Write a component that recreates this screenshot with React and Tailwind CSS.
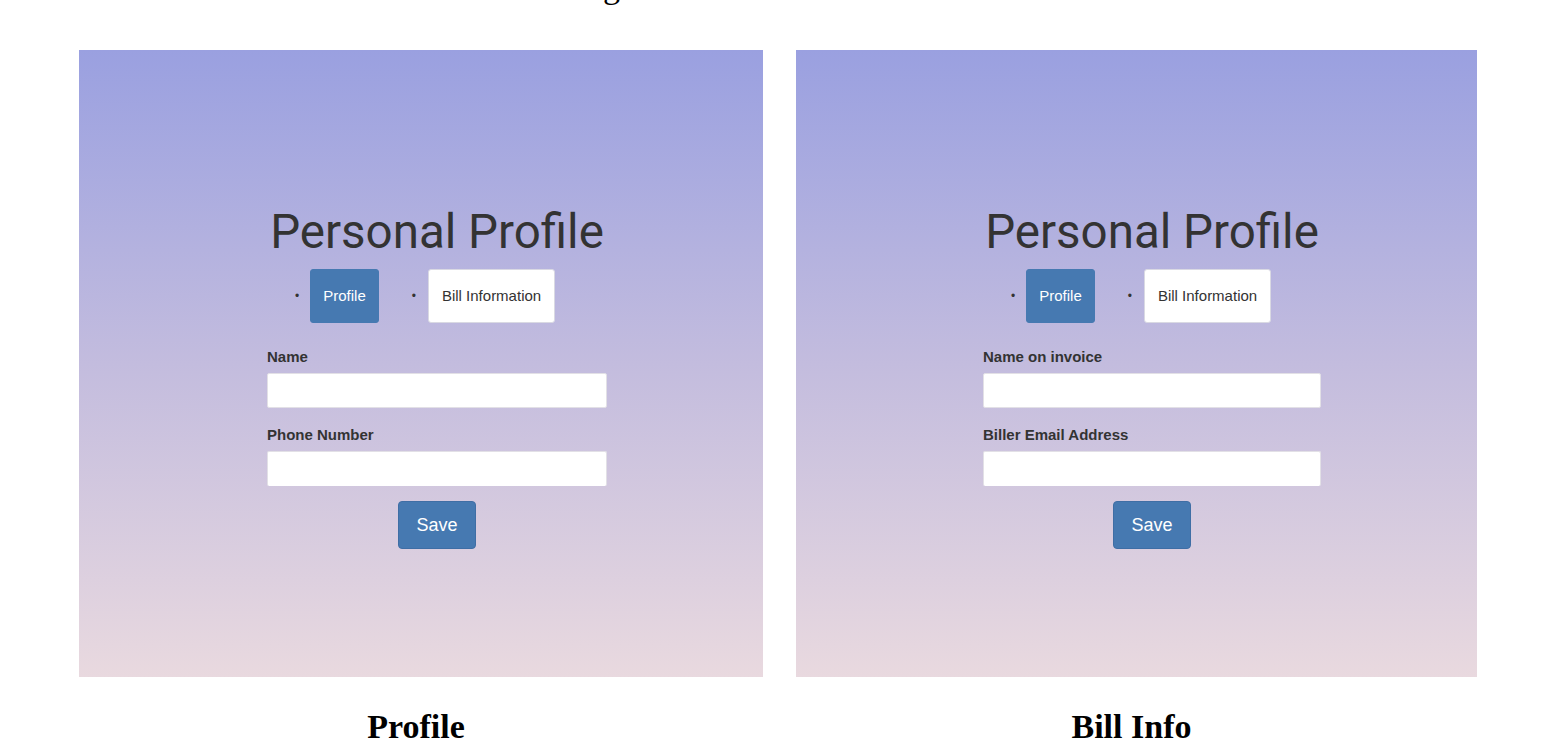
import React from 'react';

const panels = [
  {
    key: 'profile',
    width: 'w-[684px]',
    inset: 'pl-[188px]',
    column: 'w-[340px]',
    tabs: 'pl-[28px]',
    fields: ['Name', 'Phone Number'],
    caption: 'Profile',
  },
  {
    key: 'bill',
    width: 'w-[681px]',
    inset: 'pl-[187px]',
    column: 'w-[338px]',
    tabs: 'pl-[28px]',
    fields: ['Name on invoice', 'Biller Email Address'],
    caption: 'Bill Info',
  },
];

function ProfileCard({ panel }) {
  return (
    <div className={`h-[627px] pt-[155px] ${panel.inset} bg-gradient-to-b from-[#9aa0e0] via-[#c3bcde] to-[#e9d9df]`}>
      <div className={panel.column}>
        {/* Title */}
        <h1 className="text-center text-[47.5px] leading-[54px] text-[#333] font-['Roboto',sans-serif] whitespace-nowrap">
          Personal Profile
        </h1>

        {/* Tabs */}
        <ul className={`mt-[10px] ${panel.tabs} flex items-center h-[54px] font-['Liberation_Sans',Arial,sans-serif] text-[15px]`}>
          <li className="flex items-center">
            <span className="text-[#333] text-[12px] mr-[11px]">•</span>
            <button className="h-[54px] px-[12px] rounded-[3px] bg-[#4679b1] border border-[#4679b1] text-white">
              Profile
            </button>
          </li>
          <li className="flex items-center ml-[33px]">
            <span className="text-[#333] text-[12px] mr-[12px]">•</span>
            <button className="h-[54px] px-[13px] rounded-[3px] bg-white border border-[#d9d9e3] text-[#333]">
              Bill Information
            </button>
          </li>
        </ul>

        {/* Form */}
        <form className="font-['Liberation_Sans',Arial,sans-serif]">
          <label className="block mt-[25px] text-[15px] leading-[18px] font-bold text-[#333]">
            {panel.fields[0]}
          </label>
          <input
            type="text"
            className="block mt-[7px] w-full h-[35px] bg-white border border-[#e2e0e6] rounded-[2px]"
          />
          <label className="block mt-[18px] text-[15px] leading-[18px] font-bold text-[#333]">
            {panel.fields[1]}
          </label>
          <input
            type="text"
            className="block mt-[7px] w-full h-[35px] bg-white border border-[#e2e0e6] border-b-0 rounded-[2px]"
          />
          <div className="flex justify-center mt-[15px]">
            <button
              type="button"
              className="w-[78px] h-[48px] rounded-[4px] bg-[#4679b1] border border-[#3f6ea5] text-white text-[18px]"
            >
              Save
            </button>
          </div>
        </form>
      </div>
    </div>
  );
}

export default function App() {
  return (
    <div className="w-[1552px] h-[748px] overflow-hidden bg-white">
      {/* cut-off title above the figures */}
      <div className="h-[50px] overflow-hidden">
        <div className="mt-[-30px] pl-[603px] text-[34px] leading-[34px] text-black font-['Liberation_Serif','Times_New_Roman',serif]">
          g
        </div>
      </div>

      <div className="flex pl-[79px] gap-[33px]">
        {panels.map(panel => (
          <div key={panel.key} className={panel.width}>
            <ProfileCard panel={panel} />
            <div className="mt-[24px] pr-[10px] text-center text-[34px] leading-normal font-bold text-black font-['Liberation_Serif','Times_New_Roman',serif]">
              {panel.caption}
            </div>
          </div>
        ))}
      </div>
    </div>
  );
}
